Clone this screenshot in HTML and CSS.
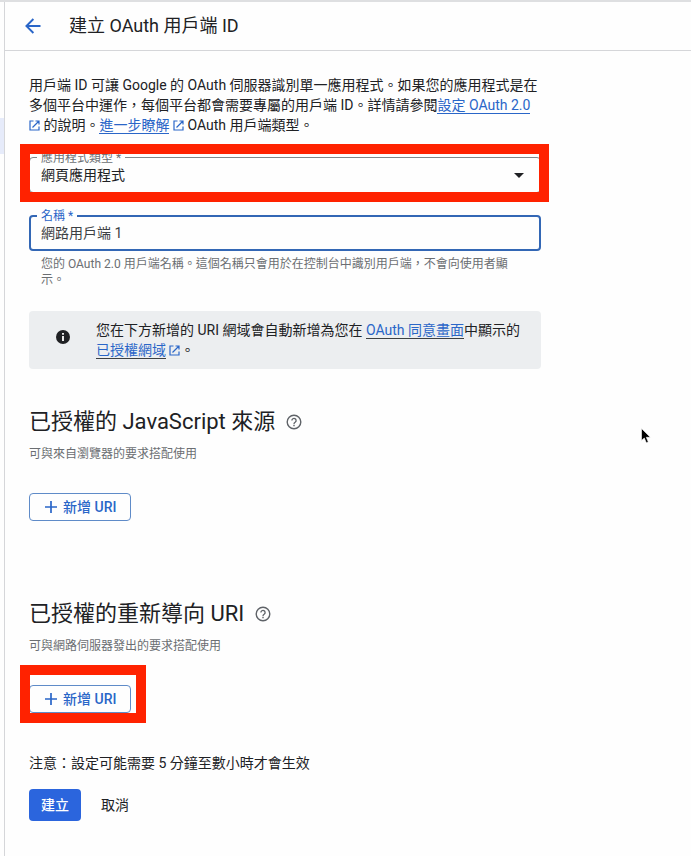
FILE: index.html
```
<!DOCTYPE html>
<html lang="zh-Hant">
<head>
  <meta charset="UTF-8" />
  <meta name="viewport" content="width=device-width, initial-scale=1" />
  <title>建立 OAuth 用戶端 ID</title>
  <link rel="stylesheet" href="styles.css">
</head>
<body>

<!-- shared icons -->
<svg class="sprite" aria-hidden="true">
  <symbol id="icon-external" viewBox="0 0 11 11">
    <path d="M4.5 1H1v9h9V6.5M6.5 1H10v3.5M10 1L3.5 7.5" fill="none" stroke="currentColor" stroke-width="1.2" />
  </symbol>
  <symbol id="icon-help" viewBox="0 0 16 16">
    <circle cx="8" cy="8" r="6.8" fill="none" stroke="currentColor" stroke-width="1.4" />
    <path d="M5.9 6.5a2.1 2.1 0 1 1 3.4 1.6C8.5 8.7 8 9 8 9.9" fill="none" stroke="currentColor" stroke-width="1.3" />
    <path d="M7.3 10.8h1.4v1.4H7.3z" fill="currentColor" />
  </symbol>
  <symbol id="icon-plus" viewBox="0 0 12 12">
    <path d="M6 0v12M0 6h12" fill="none" stroke="currentColor" stroke-width="1.7" />
  </symbol>
</svg>

<aside class="rail">
  <div class="rail-active"></div>
</aside>

<div class="page">
  <header class="page-header">
    <button type="button" class="back-btn" aria-label="返回">
      <svg width="16" height="16" viewBox="0 0 16 16" aria-hidden="true">
        <path d="M15.5 8H1.6M8.4 1L1.4 8l7 7" fill="none" stroke="currentColor" stroke-width="1.9" />
      </svg>
    </button>
    <h1>建立 OAuth 用戶端 ID</h1>
  </header>

  <main>
    <form class="client-form">
      <p class="intro">用戶端 ID 可讓 Google 的 OAuth 伺服器識別單一應用程式。如果您的應用程式是在多個平台中運作，每個平台都會需要專屬的用戶端 ID。詳情請參閱<a href="#">設定 OAuth 2.0</a> <svg class="external"><use href="#icon-external" /></svg> 的說明。<a href="#">進一步瞭解</a> <svg class="external"><use href="#icon-external" /></svg> OAuth 用戶端類型。</p>

      <div class="field field-type">
        <label for="appType">應用程式類型 *</label>
        <select id="appType">
          <option>網頁應用程式</option>
        </select>
        <svg class="caret" width="10" height="5" viewBox="0 0 10 5" aria-hidden="true"><path d="M0 0h10L5 5z" fill="currentColor" /></svg>
        <div class="highlight"></div>
      </div>

      <div class="field field-name">
        <label for="clientName">名稱 *</label>
        <input type="text" id="clientName" value="網路用戶端 1" aria-describedby="nameHint" />
      </div>
      <p class="hint" id="nameHint">您的 OAuth 2.0 用戶端名稱。這個名稱只會用於在控制台中識別用戶端，不會向使用者顯示。</p>

      <div class="notice">
        <svg class="info" width="14" height="14" viewBox="0 0 14 14" aria-hidden="true">
          <circle cx="7" cy="7" r="7" fill="#202124" />
          <path d="M6.1 3h1.8v1.7H6.1zM6.1 5.9h1.8V11H6.1z" fill="#fff" />
        </svg>
        <p>您在下方新增的 URI 網域會自動新增為您在 <a href="#">OAuth 同意畫面</a>中顯示的<a href="#">已授權網域</a> <svg class="external"><use href="#icon-external" /></svg>。</p>
      </div>

      <section>
        <h2>已授權的 JavaScript 來源 <svg class="help"><use href="#icon-help" /></svg></h2>
        <p class="section-desc">可與來自瀏覽器的要求搭配使用</p>
        <div class="add-wrap">
          <button type="button" class="add-btn"><svg width="12" height="12"><use href="#icon-plus" /></svg>新增 URI</button>
        </div>
      </section>

      <section>
        <h2>已授權的重新導向 URI <svg class="help"><use href="#icon-help" /></svg></h2>
        <p class="section-desc">可與網路伺服器發出的要求搭配使用</p>
        <div class="add-wrap">
          <button type="button" class="add-btn"><svg width="12" height="12"><use href="#icon-plus" /></svg>新增 URI</button>
          <div class="highlight"></div>
        </div>
      </section>

      <p class="note">注意：設定可能需要 5 分鐘至數小時才會生效</p>

      <div class="actions">
        <button type="submit" class="create-btn">建立</button>
        <button type="button" class="cancel-btn">取消</button>
      </div>
    </form>
  </main>
</div>

<svg class="pointer" width="10" height="16" viewBox="0 0 10 16" aria-hidden="true">
  <path d="M.5.5v12l2.8-2.5 2 4.8 2-.8-2-4.7h4z" fill="#000" stroke="#fff" stroke-width=".6" />
</svg>

</body>
</html>
```
FILE: styles.css
```
:root {
  --text: #202124;
  --text-muted: #6b6e72;
  --blue: #2a66c8;
  --blue-fill: #2b65dd;
  --line: #d5d6d9;
  --highlight: #ff2200;
}

* {
  box-sizing: border-box;
}
body {
  margin: 0;
  min-height: 100vh;
  display: flex;
  position: relative;
  border-top: 2px solid #dedfe1;
  background: #fefefe;
  color: var(--text);
  font-family: Roboto, "Noto Sans CJK TC", sans-serif;
  font-size: 14px;
  line-height: 20px;
}
h1, h2, p {
  margin: 0;
  font-weight: 400;
}
button, input, select {
  font: inherit;
  color: inherit;
}
button {
  cursor: pointer;
}
a {
  color: var(--blue);
  text-decoration: none;
  border-bottom: 1px solid currentColor;
}
.sprite {
  display: none;
}

/* edge of the collapsed navigation */
.rail {
  flex: none;
  width: 5px;
  padding-top: 116px;
  border-right: 1px solid var(--line);
}
.rail-active {
  height: 36px;
  background: #e6ebfa;
}

.page {
  flex: 1;
  min-width: 0;
}
.page-header {
  display: flex;
  align-items: center;
  gap: 28px;
  height: 49px;
  padding-left: 20px;
  border-bottom: 1px solid var(--line);
}
.page-header h1 {
  font-size: 18px;
  line-height: 24px;
}
.back-btn {
  display: flex;
  width: 16px;
  padding: 0;
  border: none;
  background: none;
  color: var(--blue);
}

main {
  padding: 24px;
}
.client-form {
  max-width: 512px;
}
.external {
  width: 11px;
  height: 11px;
  color: var(--blue);
  vertical-align: -1px;
}
.highlight {
  position: absolute;
  border: 10px solid var(--highlight);
  pointer-events: none;
}

/* outlined fields */
.field {
  position: relative;
}
.field label {
  position: absolute;
  top: -7px;
  left: 8px;
  padding: 0 4px;
  background: #fefefe;
  font-size: 12px;
  line-height: 16px;
}
.field select,
.field input {
  display: block;
  width: 100%;
  height: 36px;
  padding: 0 11px;
  border: 1px solid #80868b;
  border-radius: 4px;
  background: transparent;
  outline: none;
  appearance: none;
}
.field-type {
  margin-top: 22px;
}
.field-type label {
  color: var(--text-muted);
}
.field-type .highlight {
  inset: -13px -8px -9px -9px;
}
.caret {
  position: absolute;
  top: 16px;
  right: 17px;
}
.field-name {
  margin-top: 22px;
}
.field-name label {
  color: var(--blue);
}
.field-name input {
  padding: 0 10px 2px;
  border: 2px solid #3367b5;
  color: #3c4043;
}
.hint {
  padding: 5px 12px 0;
  color: var(--text-muted);
  font-size: 12px;
  line-height: 16px;
}

.notice {
  display: flex;
  gap: 26px;
  margin-top: 23px;
  padding: 9px 20px 9px 27px;
  border-radius: 4px;
  background: #eceef0;
}
.notice .info {
  flex: none;
  margin-top: 10px;
}
.notice a {
  border-color: #3c4043;
}

h2 {
  display: flex;
  align-items: center;
  gap: 11px;
  margin-top: 39px;
  font-size: 22px;
  line-height: 28px;
}
.help {
  flex: none;
  width: 16px;
  height: 16px;
  color: #5f6368;
}
.section-desc {
  margin-top: 10px;
  color: var(--text-muted);
  font-size: 12px;
  line-height: 16px;
}
.add-wrap {
  position: relative;
  width: fit-content;
  margin-top: 31px;
}
.add-btn {
  display: flex;
  align-items: center;
  gap: 6px;
  height: 28px;
  padding: 0 14px 0 15px;
  border: 1px solid #5f8bc8;
  border-radius: 4px;
  background: none;
  color: var(--blue);
  font-weight: 500;
}
.add-wrap .highlight {
  inset: -20px -15px -10px -9px;
}
section + section {
  margin-top: 79px;
}

.note {
  margin-top: 40px;
}
.actions {
  display: flex;
  gap: 8px;
  margin-top: 16px;
}
.create-btn,
.cancel-btn {
  height: 32px;
  padding: 0 12px;
  border: none;
  border-radius: 4px;
  background: none;
}
.create-btn {
  background: var(--blue-fill);
  color: #fff;
  font-weight: 500;
}

.pointer {
  position: absolute;
  top: 426px;
  left: 641px;
}
```
